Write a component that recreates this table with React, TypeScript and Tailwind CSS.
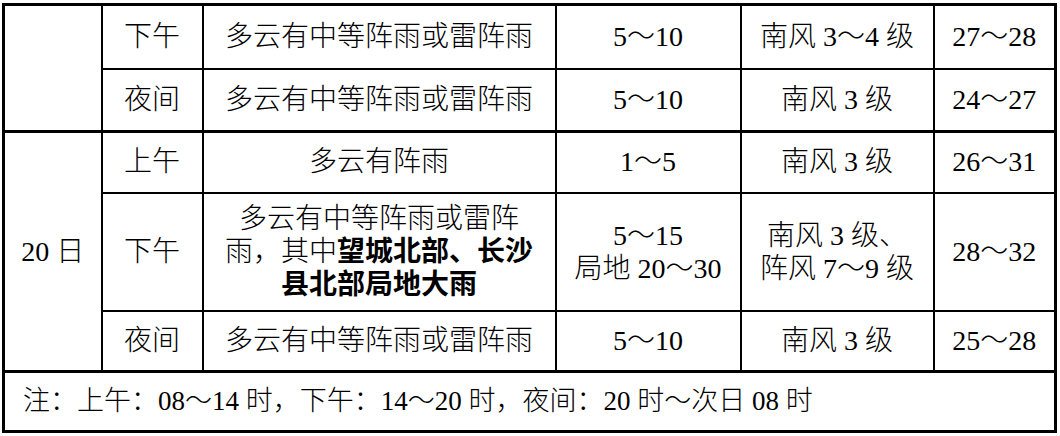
import React from 'react';

type Row = {
  period: string;
  weather: React.ReactNode;
  rain: React.ReactNode;
  wind: React.ReactNode;
  temp: string;
  h: string;
};

const cell = 'border-2 border-black text-center align-middle p-0';

const prevDay: Row[] = [
  { period: '下午', weather: '多云有中等阵雨或雷阵雨', rain: '5～10', wind: '南风 3～4 级', temp: '27～28', h: 'h-[64px]' },
  { period: '夜间', weather: '多云有中等阵雨或雷阵雨', rain: '5～10', wind: '南风 3 级', temp: '24～27', h: 'h-[63px]' },
];

const day20: Row[] = [
  { period: '上午', weather: '多云有阵雨', rain: '1～5', wind: '南风 3 级', temp: '26～31', h: 'h-[61px]' },
  {
    period: '下午',
    weather: (
      <div className="leading-[33px] px-2">
        多云有中等阵雨或雷阵
        <br />
        雨，其中<span className="font-semibold">望城北部、长沙</span>
        <br />
        <span className="font-semibold">县北部局地大雨</span>
      </div>
    ),
    rain: (
      <div className="leading-[33px]">
        5～15
        <br />
        局地 20～30
      </div>
    ),
    wind: (
      <div className="leading-[33px]">
        南风 3 级、
        <br />
        阵风 7～9 级
      </div>
    ),
    temp: '28～32',
    h: 'h-[118px]',
  },
  { period: '夜间', weather: '多云有中等阵雨或雷阵雨', rain: '5～10', wind: '南风 3 级', temp: '25～28', h: 'h-[61px]' },
];

const App: React.FC = () => {
  return (
    <div
      className="w-[1060px] h-[436px] bg-white pl-[2px] pt-[3px] text-black text-[28px] font-light"
      style={{ fontFamily: '"Liberation Serif", "Noto Sans CJK SC", serif' }}
    >
      <table className="table-fixed border-collapse border-[3px] border-black w-[1052px]">
        <colgroup>
          <col className="w-[98px]" />
          <col className="w-[101px]" />
          <col className="w-[353px]" />
          <col className="w-[185px]" />
          <col className="w-[193px]" />
          <col className="w-[122px]" />
        </colgroup>
        <tbody>
          {prevDay.map((r, i) => (
            <tr key={`p${i}`} className={r.h}>
              {i === 0 && <td rowSpan={2} className={`${cell} border-l-[3px]`} />}
              <td className={cell}>{r.period}</td>
              <td className={cell}>{r.weather}</td>
              <td className={cell}>{r.rain}</td>
              <td className={cell}>{r.wind}</td>
              <td className={cell}>{r.temp}</td>
            </tr>
          ))}
          {day20.map((r, i) => (
            <tr key={`d${i}`} className={r.h}>
              {i === 0 && (
                <td rowSpan={3} className={`${cell} border-t-[3px] border-b-[3px]`}>
                  20 日
                </td>
              )}
              <td className={`${cell} ${i === 0 ? 'border-t-[3px]' : ''}`}>{r.period}</td>
              <td className={`${cell} ${i === 0 ? 'border-t-[3px]' : ''}`}>{r.weather}</td>
              <td className={`${cell} ${i === 0 ? 'border-t-[3px]' : ''}`}>{r.rain}</td>
              <td className={`${cell} ${i === 0 ? 'border-t-[3px]' : ''}`}>{r.wind}</td>
              <td className={`${cell} ${i === 0 ? 'border-t-[3px]' : ''}`}>{r.temp}</td>
            </tr>
          ))}
          <tr className="h-[60px]">
            <td colSpan={6} className="border-[3px] border-black text-left align-middle pl-[18px] text-[27px]">
              注：上午：08～14 时，下午：14～20 时，夜间：20 时～次日 08 时
            </td>
          </tr>
        </tbody>
      </table>
    </div>
  );
};

export default App;
